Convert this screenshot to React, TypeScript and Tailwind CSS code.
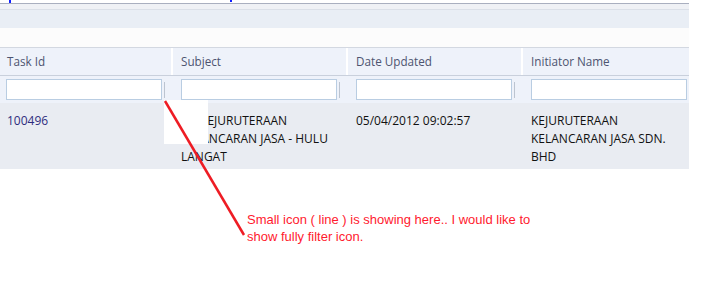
import React from "react";

const cols = [
  { title: "Task Id", w: "w-[173px]", pl: "pl-[7px]", fpl: "pl-[6px]" },
  { title: "Subject", w: "w-[175px]", pl: "pl-[8px]", fpl: "pl-[8px]" },
  { title: "Date Updated", w: "w-[175px]", pl: "pl-[8px]", fpl: "pl-[8px]" },
  { title: "Initiator Name", w: "w-[166px]", pl: "pl-[8px]", fpl: "pl-[8px]" },
];

function FilterCell({ w, pl, last }: { w: string; pl: string; last?: boolean }) {
  return (
    <div className={`${w} ${pl} flex items-center h-full`}>
      <div className="w-[156px] h-[21px] bg-white border border-[#b9cde2]" />
      {!last && <div className="ml-[2px] w-px h-[16px] bg-[#bcc4d0]" />}
    </div>
  );
}

export default function App() {
  return (
    <div
      className="relative w-[725px] h-[302px] bg-white overflow-hidden"
      style={{ fontFamily: "'Open Sans', 'Noto Sans', sans-serif" }}
    >
      <div className="w-[689px]">
        <div className="h-[3px] flex">
          <div className="ml-[9px] w-[2px] h-[3px] bg-[#1020ff]" />
          <div className="ml-[219px] w-[2px] h-[2px] bg-[#1020ff]" />
        </div>
        <div className="h-px bg-[#a9afbf]" />
        <div className="h-[5px] bg-[#eff1f5]" />
        <div className="h-px bg-[#dbe0e8]" />
        <div className="h-[18px] bg-[#e9eef5]" />
        <div className="h-[19px] bg-[#fcfcfc]" />

        <div className="h-px bg-[#d3d8e1]" />
        <div className="flex h-[28px] bg-[#eef2fa] border-b border-[#c9d0dc]">
          {cols.map((c, i) => (
            <div
              key={c.title}
              className={`${c.w} ${c.pl} flex items-center text-[11.7px] text-[#4d5470] ${
                i < cols.length - 1 ? "border-r-2 border-white" : ""
              }`}
            >
              {c.title}
            </div>
          ))}
        </div>

        <div className="flex h-[27px] bg-[#eef2fa]">
          {cols.map((c, i) => (
            <FilterCell key={c.title} w={c.w} pl={c.fpl} last={i === cols.length - 1} />
          ))}
        </div>

        <div className="flex h-[66px] bg-[#e9ecf2] pt-[9px] text-[12px] leading-[18px] text-[#111]">
          <div className="w-[173px] pl-[7px] text-[#2e2c7e]">100496</div>
          <div className="w-[175px] pl-[8px]">
            <div>PG KEJURUTERAAN</div>
            <div>KELANCARAN JASA - HULU</div>
            <div>LANGAT</div>
          </div>
          <div className="w-[175px] pl-[8px]">05/04/2012 09:02:57</div>
          <div className="w-[166px] pl-[8px]">
            <div>KEJURUTERAAN</div>
            <div>KELANCARAN JASA SDN.</div>
            <div>BHD</div>
          </div>
        </div>
      </div>

      {/* redaction patch */}
      <div className="absolute left-[164px] top-[100px] w-[44px] h-[44px] bg-white" />

      {/* annotation arrow */}
      <svg className="absolute left-0 top-0" width="725" height="302">
        <line x1="165" y1="101" x2="244" y2="235" stroke="#ee1c24" strokeWidth="2.5" />
      </svg>

      <div
        className="absolute left-[247px] top-[211px] text-[13px] leading-[17px] text-[#ff1a2e]"
        style={{ fontFamily: "'Liberation Sans', Arial, sans-serif" }}
      >
        <div>Small icon ( line ) is showing here.. I would like to</div>
        <div>show fully filter icon.</div>
      </div>
    </div>
  );
}
